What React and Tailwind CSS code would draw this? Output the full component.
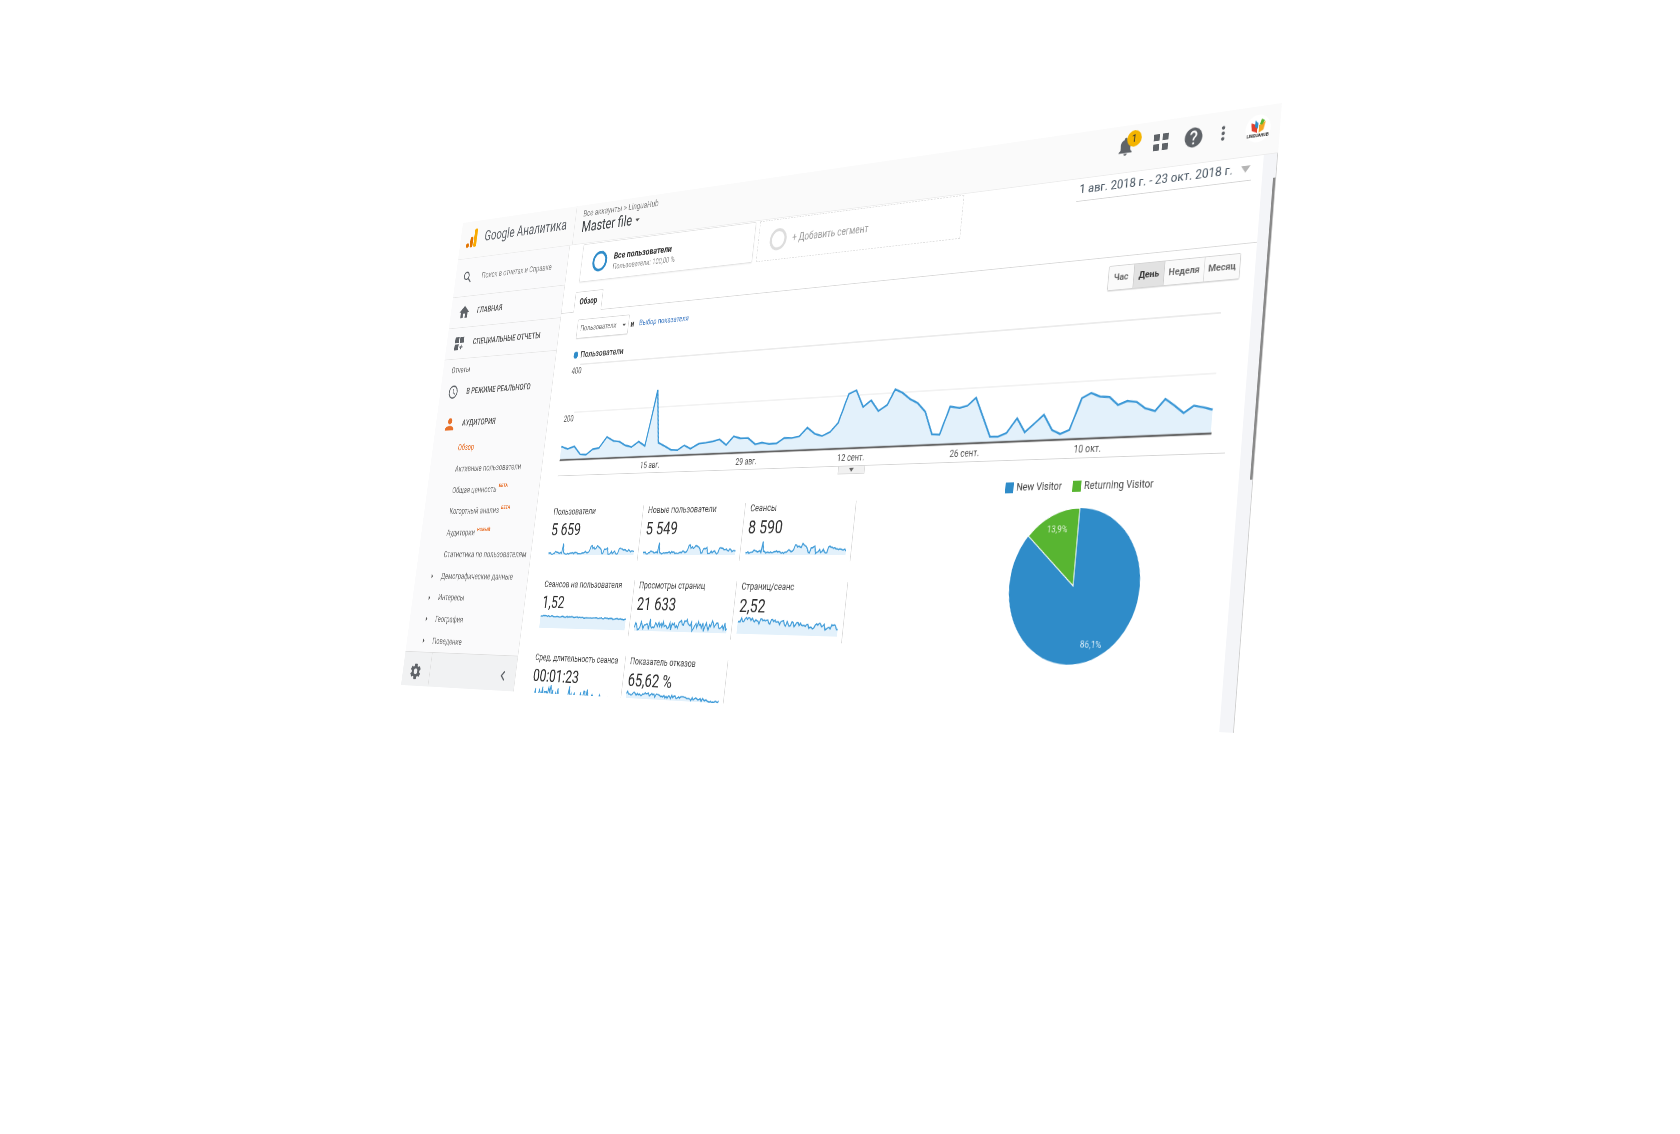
import React from "react";
import { MdHome, MdPerson, MdNotifications, MdHelp, MdMoreVert, MdSettings, MdChevronLeft, MdArrowDropDown, MdArrowRight, MdSearch, MdAccessTime } from "react-icons/md";

const W = 1400;
const H = 700;
// corners of the tilted window on the page: top-left, top-right, bottom-right, bottom-left
const Q = [[463, 223], [1282, 103], [1234, 733], [401, 685]];

function homography() {
  const [[x0, y0], [x1, y1], [x2, y2], [x3, y3]] = Q;
  const dx1 = x1 - x2, dx2 = x3 - x2, sx = x0 - x1 + x2 - x3;
  const dy1 = y1 - y2, dy2 = y3 - y2, sy = y0 - y1 + y2 - y3;
  const den = dx1 * dy2 - dx2 * dy1;
  const g = (sx * dy2 - dx2 * sy) / den;
  const h = (dx1 * sy - sx * dy1) / den;
  return { a: x1 - x0 + g * x1, b: x3 - x0 + h * x3, c: x0, d: y1 - y0 + g * y1, e: y3 - y0 + h * y3, f: y0, g, h };
}
const M = homography();
const matrix = `matrix3d(${M.a / W},${M.d / W},0,${M.g / W},${M.b / H},${M.e / H},0,${M.h / H},0,0,1,0,${M.c},${M.f},0,1)`;

function toFlat(x, y) {
  const A = M.a - M.g * x, B = M.b - M.h * x, C = x - M.c;
  const D = M.d - M.g * y, E = M.e - M.h * y, F = y - M.f;
  const det = A * E - B * D;
  return [((C * E - B * F) / det) * W, ((A * F - C * D) / det) * H];
}

// traced chart line, as seen on the page
const traced = [[48,320],[62,327],[77,319],[90,343],[103,344],[118,328],[132,324],[150,291],[165,303],[178,305],[191,316],[205,321],[221,305],[235,318],[264,150],[265,308],[280,319],[294,330],[308,330],[323,316],[337,326],[356,311],[372,308],[388,304],[402,298],[417,315],[434,289],[449,295],[466,294],[482,313],[497,308],[513,312],[530,310],[547,294],[564,294],[581,289],[599,263],[616,282],[632,288],[650,276],[668,249],[692,162],[709,151],[724,201],[742,181],[758,213],[778,195],[796,148],[812,158],[830,178],[846,189],[863,215],[878,283],[895,284],[919,200],[940,204],[958,197],[977,173],[1008,290],[1026,290],[1045,279],[1069,235],[1086,277],[1108,250],[1129,224],[1147,270],[1165,282],[1186,270],[1214,175],[1235,159],[1255,170],[1276,171],[1295,195],[1316,183],[1337,186],[1356,205],[1378,213],[1401,177],[1421,196],[1442,219],[1465,197],[1486,202],[1507,209]];

const CX = 283, CY = 236, BASE = 137;
const chartPts = traced.map(([zx, zy]) => {
  const [x, y] = toFlat(540 + zx / 2.24, 340 + zy / 3);
  return [x - CX, y - CY];
});
const users = chartPts.map(([, y]) => BASE - y);
const rnd = (i, s) => {
  const v = Math.sin(i * 12.9898 + s * 78.233) * 43758.5453;
  return v - Math.floor(v);
};
const series = {
  users,
  newUsers: users.map((v, i) => v * 0.97 + rnd(i, 1) * 6),
  sessions: users.map((v, i) => v * 0.95 + rnd(i, 2) * 14),
  perUser: users.map((_, i) => 70 - i * 0.12 + rnd(i, 3) * 7),
  views: users.map((v, i) => v * 0.55 + rnd(i, 4) * 45),
  pages: users.map((_, i) => 70 - i * 0.45 + rnd(i, 5) * 36),
  duration: users.map((_, i) => 20 + rnd(i, 6) * rnd(i, 7) * 90),
  bounce: users.map((_, i) => 72 - i * 0.25 + rnd(i, 8) * 20),
};

function Spark({ data, max = 100 }) {
  const w = 170, h = 24;
  const pts = data.map((v, i) => [(i / (data.length - 1)) * w, h - (v / max) * (h - 1)]);
  const line = pts.map((p) => p.map((n) => n.toFixed(1)).join(",")).join(" ");
  return (
    <svg width={w} height={h} className="block">
      <polygon points={`0,${h} ${line} ${w},${h}`} fill="#e3f1fb" />
      <polyline points={line} fill="none" stroke="#3f9bd8" strokeWidth="1.8" />
    </svg>
  );
}

function Metric({ label, value, data, max }) {
  return (
    <div className="h-[76px] border-r border-[#d8d8d8] pl-[9px] overflow-visible">
      <div className="text-[12.8px] leading-[16px] text-[#444] mt-[-1px] whitespace-nowrap">{label}</div>
      <div className="text-[24px] leading-[24px] text-[#2c2c2c] mt-[5px]">{value}</div>
      <Spark data={data} max={max} />
    </div>
  );
}

function Sub({ children, badge, arrow, active }) {
  return (
    <div className={`h-[31.7px] flex items-center pl-[58px] text-[12.6px] relative ${active ? "text-[#e8702a]" : "text-[#707070]"}`}>
      {arrow && <MdArrowRight className="absolute left-[30px] text-[#555]" size={16} />}
      <span className="whitespace-nowrap">{children}</span>
      {badge && <span className="ml-[4px] -mt-[10px] text-[8px] font-bold text-[#e8702a]">{badge}</span>}
    </div>
  );
}

function Nav({ icon, children, h, line }) {
  return (
    <div className={`flex items-center ${h} ${line ? "border-b border-[#e6e6e6]" : ""} text-[12.6px] text-[#555] font-medium whitespace-nowrap`}>
      <span className="w-[60px] pl-[18px] flex items-center shrink-0">{icon}</span>
      <span>{children}</span>
    </div>
  );
}

function GaLogo() {
  return (
    <svg width="24" height="30" viewBox="0 0 24 30">
      <circle cx="3.6" cy="26" r="3.4" fill="#e37400" />
      <rect x="9" y="13" width="6.4" height="16.4" rx="3" fill="#e37400" />
      <rect x="17" y="1" width="6.6" height="28.4" rx="3" fill="#f9ab00" />
    </svg>
  );
}

function Apps() {
  return (
    <svg width="22" height="22" viewBox="0 0 22 22" fill="#5f6368">
      <rect x="1" y="1" width="8" height="8" />
      <rect x="13" y="1" width="8" height="8" />
      <rect x="1" y="13" width="8" height="8" />
      <rect x="13" y="13" width="8" height="8" />
    </svg>
  );
}

function CustomReports() {
  return (
    <svg width="22" height="22" viewBox="0 0 22 22" fill="#5f6368">
      <rect x="1" y="1" width="9" height="9" />
      <rect x="12" y="1" width="9" height="9" />
      <rect x="1" y="12" width="9" height="9" />
      <rect x="15" y="13" width="2" height="7" />
      <rect x="12.5" y="15.5" width="7" height="2" />
    </svg>
  );
}

function HubLogo() {
  return (
    <div className="w-[32px] h-[32px] rounded-full bg-white flex flex-col items-center justify-center">
      <svg width="22" height="16" viewBox="0 0 22 16">
        <polygon points="2,4 10,7 10,16 3,13" fill="#e0402f" />
        <polygon points="20,3 12,7 12,16 18,13" fill="#f5a623" />
        <polygon points="7,1 11,5 11,11 7,9" fill="#2f8cc9" />
        <polygon points="15,0 13,6 16,7 19,2" fill="#58b531" />
      </svg>
      <span className="text-[5px] leading-[6px] font-bold text-[#222] whitespace-nowrap">LINGUAHUB</span>
    </div>
  );
}

const dayLabels = [["15 авг.", 180], ["29 авг.", 358], ["12 сент.", 537], ["26 сент.", 716], ["10 окт.", 894]];

function Chart() {
  const line = chartPts.map((p) => p.map((n) => n.toFixed(1)).join(",")).join(" ");
  const last = chartPts[chartPts.length - 1][0];
  return (
    <svg width="1079" height="160" className="block overflow-visible">
      <line x1="18" x2="1060" y1="0" y2="0" stroke="#e4e4e4" strokeWidth="1.5" />
      <line x1="18" x2="1060" y1="69" y2="69" stroke="#eeeeee" strokeWidth="1.5" />
      <polygon points={`${chartPts[0][0]},${BASE} ${line} ${last},${BASE}`} fill="#e3f1fb" />
      <polyline points={line} fill="none" stroke="#3a97d6" strokeWidth="2.4" />
      <line x1="0" x2="1060" y1={BASE} y2={BASE} stroke="#666" strokeWidth="2.4" />
      <text x="2" y="13" fontSize="12" fill="#555">400</text>
      <text x="-2" y="82" fontSize="12" fill="#555">200</text>
      {dayLabels.map(([t, x]) => (
        <text key={t} x={x + 2} y={153} fontSize="12" fill="#555" textAnchor="middle">{t}</text>
      ))}
    </svg>
  );
}

function Pie() {
  const r = 90;
  const a = (-50 * Math.PI) / 180;
  const x = 90 + r * Math.sin(a), y = 90 - r * Math.cos(a);
  return (
    <svg width="180" height="180" className="block">
      <circle cx="90" cy="90" r="90" fill="#2f8cc9" />
      <path d={`M90 90 L${x} ${y} A90 90 0 0 1 90 0 Z`} fill="#58b531" stroke="#ffffff" strokeWidth="1.2" />
      <text x="61" y="28" fontSize="11" fill="#dff0d8" textAnchor="middle">13,9%</text>
      <text x="121" y="160" fontSize="11" fill="#d8ecf8" textAnchor="middle">86,1%</text>
    </svg>
  );
}

export default function App() {
  return (
    <div className="w-full h-[1134px] bg-white overflow-hidden font-[Roboto,sans-serif]">
      <div
        className="w-[1400px] h-[700px] origin-top-left bg-white overflow-hidden flex flex-col blur-[0.55px]"
        style={{ transform: matrix }}
      >
        {/* top bar */}
        <div className="h-[58px] shrink-0 bg-[#fafafa] flex items-center border-b border-[#ececec]">
          <div className="w-[253px] h-full flex items-center pl-[14px] pb-[5px] border-r border-[#e6e6e6] shrink-0">
            <GaLogo />
            <span className="ml-[17px] text-[21.3px] text-[#5f6368] whitespace-nowrap">Google Аналитика</span>
          </div>
          <div className="pl-[15px] pb-[6px] flex flex-col">
            <span className="text-[12.5px] leading-[14px] text-[#808080] whitespace-nowrap">Все аккаунты &gt; LinguaHub</span>
            <span className="text-[22px] leading-[26px] text-[#3c4043] flex items-center whitespace-nowrap">
              Master file
              <MdArrowDropDown size={20} className="text-[#555]" />
            </span>
          </div>
          <div className="ml-auto -mt-[6px] flex items-center text-[#5f6368]">
            <div className="w-[44px] flex justify-center relative">
              <MdNotifications size={27} />
              <span className="absolute -top-[5px] left-[24px] w-[20px] h-[20px] rounded-full bg-[#f4b400] text-[#333] text-[12px] font-medium flex items-center justify-center">1</span>
            </div>
            <div className="w-[44px] flex justify-center ml-[5px]"><Apps /></div>
            <div className="w-[44px] flex justify-center"><MdHelp size={28} /></div>
            <div className="w-[34px] flex justify-center"><MdMoreVert size={26} /></div>
            <div className="w-[56px] flex justify-center"><HubLogo /></div>
          </div>
        </div>

        <div className="flex-1 flex min-h-0">
          {/* sidebar */}
          <div className="w-[248px] shrink-0 bg-[#fafafb] border-r border-[#e4e4e4] flex flex-col">
            <div className="h-[59px] flex items-center border-b border-[#e6e6e6] text-[12.2px] text-[#8a8a8a]">
              <span className="w-[60px] pl-[16px] shrink-0"><MdSearch size={24} className="text-[#5f6368]" /></span>
              <span className="whitespace-nowrap">Поиск в отчетах и Справке</span>
            </div>
            <Nav h="h-[48px]" line icon={<MdHome size={26} className="text-[#5f6368]" />}>ГЛАВНАЯ</Nav>
            <Nav h="h-[48px]" line icon={<CustomReports />}>СПЕЦИАЛЬНЫЕ ОТЧЕТЫ</Nav>
            <div className="h-[33px] flex items-center pl-[20px] text-[12px] text-[#666]">Отчеты</div>
            <Nav h="h-[34px]" icon={<MdAccessTime size={24} className="text-[#5f6368]" />}>В РЕЖИМЕ РЕАЛЬНОГО</Nav>
            <div className="h-[10px]" />
            <Nav h="h-[43px]" icon={<MdPerson size={28} className="text-[#e8702a]" />}>АУДИТОРИЯ</Nav>
            <Sub active>Обзор</Sub>
            <Sub>Активные пользователи</Sub>
            <Sub badge="БЕТА">Общая ценность</Sub>
            <Sub badge="БЕТА">Когортный анализ</Sub>
            <Sub badge="НОВЫЙ">Аудитории</Sub>
            <Sub>Статистика по пользователям</Sub>
            <Sub arrow>Демографические данные</Sub>
            <Sub arrow>Интересы</Sub>
            <Sub arrow>География</Sub>
            <Sub arrow>Поведение</Sub>
            <div className="flex-1 flex bg-[#f1f2f3] border-t border-[#dedede] min-h-[47px]">
              <div className="w-[62px] flex items-center justify-center border-r border-[#dedede] pr-[4px] pt-[7px]"><MdSettings size={28} className="text-[#5f6368]" /></div>
              <div className="flex-1 flex items-center justify-end pr-[12px] pt-[7px]"><MdChevronLeft size={28} className="text-[#5f6368]" /></div>
            </div>
          </div>

          {/* main */}
          <div className="flex-1 min-w-0">
            <div className="h-[101px] border-b border-[#d8d8d8] pl-[25px] pr-[14px] flex justify-between relative">
              <div className="flex flex-col">
                <div className="flex gap-[7px] mt-[1px] ml-[4px]">
                  <div className="w-[336px] h-[56px] border border-[#e2e2e2] rounded-[2px] flex items-center pl-[22px] shadow-[0_1px_2px_rgba(0,0,0,0.08)]">
                    <span className="w-[30px] h-[30px] rounded-full border-[4px] border-[#2f8cc9] shrink-0" />
                    <div className="ml-[13px] mt-[2px]">
                      <div className="text-[13.5px] leading-[18px] font-bold text-[#333]">Все пользователи</div>
                      <div className="text-[11px] leading-[15px] text-[#888]">Пользователи: 100,00 %</div>
                    </div>
                  </div>
                  <div className="w-[342px] h-[56px] border border-dashed border-[#dcdcdc] flex items-center pl-[20px]">
                    <span className="w-[30px] h-[30px] rounded-full border-[4px] border-[#dddddd] shrink-0" />
                    <span className="ml-[10px] text-[13.8px] text-[#9a9a9a]">+ Добавить сегмент</span>
                  </div>
                </div>
                <div className="mt-auto -mb-px w-[57px] h-[30px] border border-b-white border-[#d8d8d8] bg-white rounded-t-[2px] flex items-center justify-center text-[12.5px] font-bold text-[#333]">Обзор</div>
              </div>
              <div className="w-[236px] h-[28px] border-b border-[#d4d4d4] flex items-center justify-between pl-[3px] pr-[2px] text-[15.5px] text-[#44525f] whitespace-nowrap">
                <span>1 авг. 2018 г. - 23 окт. 2018 г.</span>
                <span className="w-0 h-0 border-x-[6px] border-x-transparent border-t-[8px] border-t-[#b5b5b5]" />
              </div>
            </div>

            <div className="flex justify-between pt-[11px] pl-[37px] pr-[19px]">
              <div className="flex items-center h-[28px]">
                <div className="w-[105px] h-[28px] border border-[#d8d8d8] rounded-[2px] flex items-center justify-between pl-[6px] text-[11px] text-[#777] shadow-[0_1px_1px_rgba(0,0,0,0.1)]">
                  Пользователи
                  <MdArrowDropDown size={16} className="text-[#555]" />
                </div>
                <span className="ml-[4px] text-[12px] font-bold text-[#444]">и</span>
                <span className="ml-[10px] text-[11px] text-[#3b78c2]">Выбор показателя</span>
              </div>
              <div className="flex h-[30px] border border-[#d4d4d4] rounded-[2px] text-[11.5px] font-bold text-[#666] -mt-[1px] shadow-[0_1px_1px_rgba(0,0,0,0.12)]">
                <div className="w-[34px] flex items-center justify-center bg-[#fafafa]">Час</div>
                <div className="w-[42px] flex items-center justify-center bg-[#e2e2e2] text-[#333] border-x border-[#cfcfcf]">День</div>
                <div className="w-[53px] flex items-center justify-center bg-[#fafafa] border-r border-[#dcdcdc]">Неделя</div>
                <div className="w-[45px] flex items-center justify-center bg-[#fafafa]">Месяц</div>
              </div>
            </div>

            <div className="h-[37px] pl-[37px] pt-[15px] flex items-start">
              <span className="w-[9px] h-[10px] rounded-full bg-[#2f8cc9] mt-[3px]" />
              <span className="ml-[5px] text-[13px] leading-[16px] font-medium text-[#444]">Пользователи</span>
            </div>

            <div className="ml-[35px] w-[1079px] h-[160px] border-b border-[#d4d4d4] relative">
              <Chart />
              <div className="absolute left-[520px] top-[160px] w-[44px] h-[10px] bg-[#f1f1f1] border border-t-0 border-[#d8d8d8] flex items-center justify-center">
                <span className="w-0 h-0 border-x-[4px] border-x-transparent border-t-[5px] border-t-[#666]" />
              </div>
            </div>

            <div className="flex pl-[27px]">
              <div className="w-[564px] mt-[44px] grid grid-cols-3 gap-y-[26px] shrink-0">
                <Metric label="Пользователи" value="5 659" data={series.users} max={130} />
                <Metric label="Новые пользователи" value="5 549" data={series.newUsers} max={130} />
                <Metric label="Сеансы" value="8 590" data={series.sessions} max={130} />
                <Metric label="Сеансов на пользователя" value="1,52" data={series.perUser} />
                <Metric label="Просмотры страниц" value="21 633" data={series.views} />
                <Metric label="Страниц/сеанс" value="2,52" data={series.pages} max={110} />
                <Metric label="Сред. длительность сеанса" value="00:01:23" data={series.duration} />
                <Metric label="Показатель отказов" value="65,62 %" data={series.bounce} />
              </div>
              <div className="ml-[162px] w-[350px] shrink-0 mt-[24px] flex flex-col items-center">
                <div className="flex items-center h-[16px] text-[12.7px] text-[#444] gap-[15px] whitespace-nowrap mr-[12px]">
                  <span className="flex items-center gap-[4px]"><span className="w-[12px] h-[13px] bg-[#2f8cc9]" />New Visitor</span>
                  <span className="flex items-center gap-[4px]"><span className="w-[12px] h-[13px] bg-[#58b531]" />Returning Visitor</span>
                </div>
                <div className="mt-[18px]"><Pie /></div>
              </div>
            </div>
          </div>

          {/* scrollbar */}
          <div className="w-[18px] shrink-0 bg-[#f4f5f8] border-r border-[#cfcfcf] flex flex-col items-end">
            <div className="mt-[28px] w-[3px] h-[340px] bg-[#8a8a8a]" />
          </div>
        </div>
      </div>
    </div>
  );
}
